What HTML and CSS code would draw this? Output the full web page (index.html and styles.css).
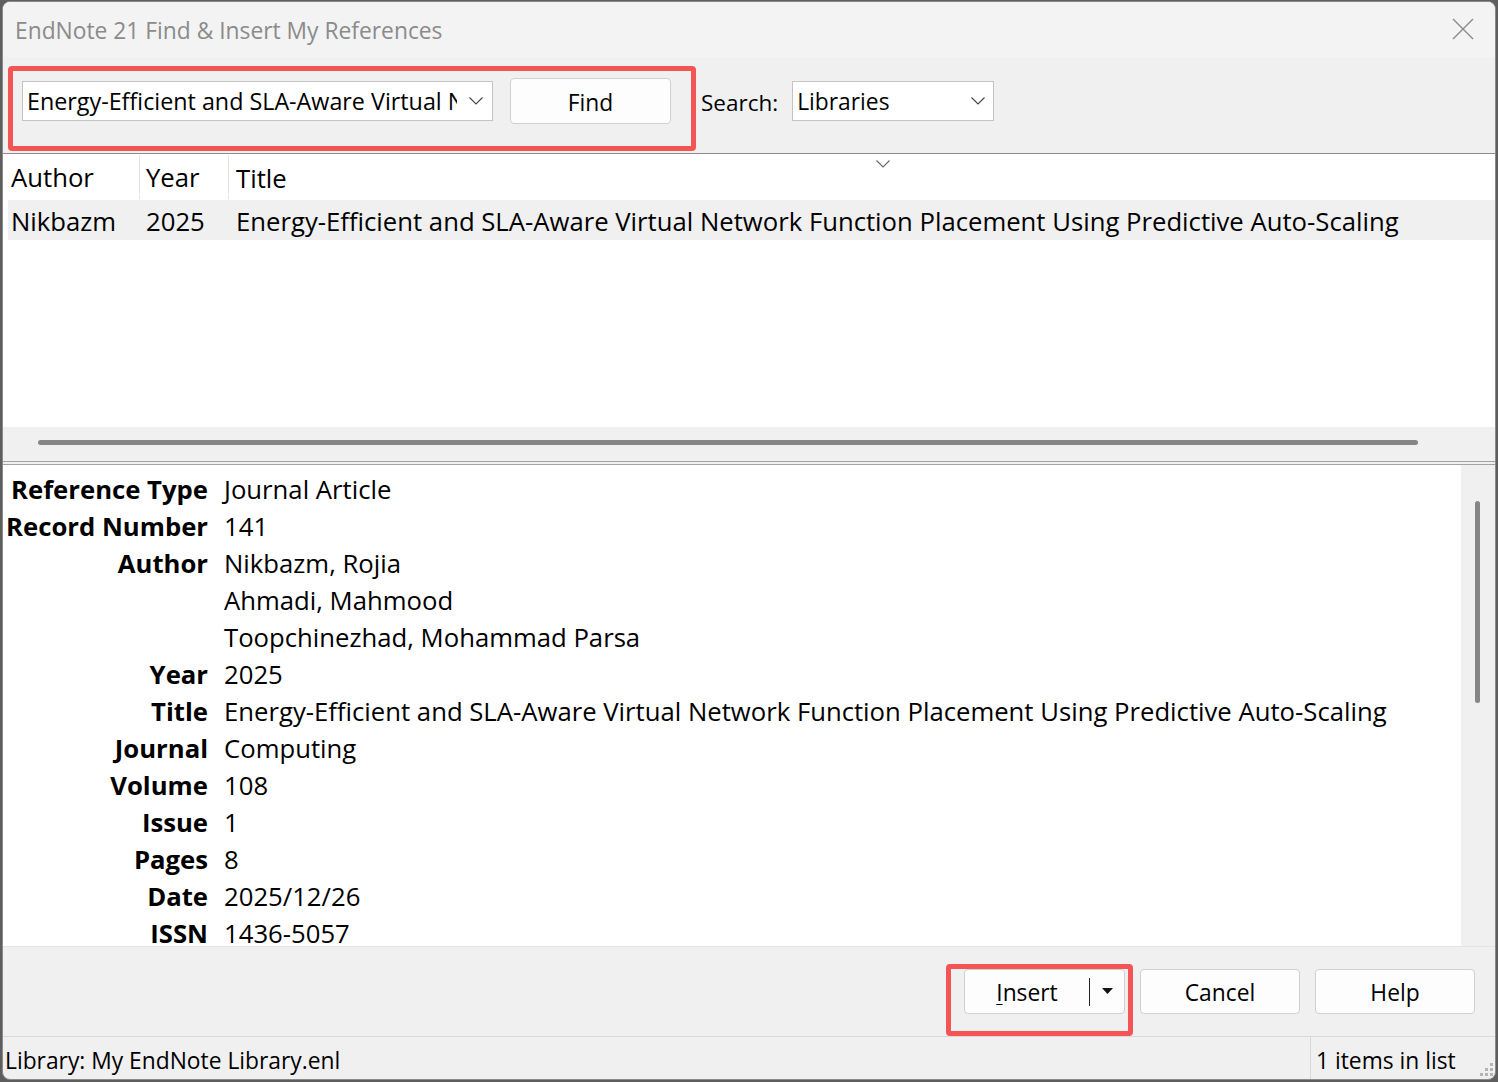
FILE: index.html
```html
<!DOCTYPE html>
<html lang="en">
<head>
<meta charset="utf-8">
<title>EndNote 21 Find &amp; Insert My References</title>
<link rel="stylesheet" href="styles.css">
</head>
<body>
<div class="window">
  <div class="titlebar">
    <span class="title">EndNote 21 Find &amp; Insert My References</span>
    <svg class="close" width="22" height="22" viewBox="0 0 22 22"><path d="M1 1 L21 21 M21 1 L1 21" stroke="#8a8a8a" stroke-width="1.4" fill="none"/></svg>
  </div>

  <div class="toolbar">
    <div class="highlight find-group">
      <div class="combo combo-query">
        <span class="combo-text">Energy-Efficient and SLA-Aware Virtual Network Function Placement Using Predictive Auto-Scaling</span>
        <span class="combo-arrow"><svg width="14" height="8" viewBox="0 0 14 8"><path d="M0.5 0.5 L7 7 L13.5 0.5" stroke="#444" stroke-width="1.1" fill="none"/></svg></span>
      </div>
      <button class="btn btn-find">Find</button>
    </div>
    <div class="search-group">
      <span class="search-label">Search:</span>
      <div class="combo combo-lib">
        <span class="combo-text">Libraries</span>
        <span class="combo-arrow"><svg width="14" height="8" viewBox="0 0 14 8"><path d="M0.5 0.5 L7 7 L13.5 0.5" stroke="#444" stroke-width="1.1" fill="none"/></svg></span>
      </div>
    </div>
  </div>

  <div class="list">
    <div class="list-header">
      <div class="hcell hc-author">Author</div>
      <div class="hcell hc-year">Year</div>
      <div class="hcell hc-title">Title</div>
      <svg class="sort-arrow" width="14" height="8" viewBox="0 0 14 8"><path d="M0.5 0.5 L7 7 L13.5 0.5" stroke="#666" stroke-width="1.1" fill="none"/></svg>
    </div>
    <div class="list-row">
      <div class="rcell rc-author">Nikbazm</div>
      <div class="rcell rc-year">2025</div>
      <div class="rcell rc-title">Energy-Efficient and SLA-Aware Virtual Network Function Placement Using Predictive Auto-Scaling</div>
    </div>
    <div class="list-empty"></div>
    <div class="hscroll"><div class="hthumb"></div></div>
  </div>
  <div class="splitter"></div>

  <div class="details">
    <div class="details-content">
      <dl class="fields">
        <dt>Reference Type</dt><dd>Journal Article</dd>
        <dt>Record Number</dt><dd>141</dd>
        <dt>Author</dt><dd>Nikbazm, Rojia</dd>
        <dt></dt><dd>Ahmadi, Mahmood</dd>
        <dt></dt><dd>Toopchinezhad, Mohammad Parsa</dd>
        <dt>Year</dt><dd>2025</dd>
        <dt>Title</dt><dd>Energy-Efficient and SLA-Aware Virtual Network Function Placement Using Predictive Auto-Scaling</dd>
        <dt>Journal</dt><dd>Computing</dd>
        <dt>Volume</dt><dd>108</dd>
        <dt>Issue</dt><dd>1</dd>
        <dt>Pages</dt><dd>8</dd>
        <dt>Date</dt><dd>2025/12/26</dd>
        <dt>ISSN</dt><dd>1436-5057</dd>
        <dt>DOI</dt><dd>10.1007/s00607-025-01596-x</dd>
      </dl>
    </div>
    <div class="vscroll"><div class="vthumb"></div></div>
  </div>

  <div class="buttons">
    <div class="highlight insert-group">
      <div class="btn btn-split">
        <span class="split-main"><span class="accel">I</span>nsert</span>
        <span class="split-sep"></span>
        <span class="split-drop"><svg width="11" height="6" viewBox="0 0 11 6"><path d="M0 0 L11 0 L5.5 6 Z" fill="#111"/></svg></span>
      </div>
    </div>
    <button class="btn btn-cancel">Cancel</button>
    <button class="btn btn-help">Help</button>
  </div>

  <div class="statusbar">
    <div class="status-left">Library: My EndNote Library.enl</div>
    <div class="status-right">
      <span>1 items in list</span>
      <svg class="grip" width="16" height="16" viewBox="0 0 16 16" fill="#b4b4b4">
        <rect x="12" y="1" width="3" height="3"/>
        <rect x="7" y="6" width="3" height="3"/><rect x="12" y="6" width="3" height="3"/>
        <rect x="2" y="11" width="3" height="3"/><rect x="7" y="11" width="3" height="3"/><rect x="12" y="11" width="3" height="3"/>
      </svg>
    </div>
  </div>
</div>
</body>
</html>
```

FILE: styles.css
```css
* { box-sizing: border-box; }

html, body {
  margin: 0;
  width: 1498px;
  height: 1082px;
  overflow: hidden;
}

body {
  padding: 1px 0 0 2px;
  background: #5e5e5e;
  font-family: "Open Sans", "Noto Sans", sans-serif;
  color: #000;
}

.window {
  width: 1494px;
  height: 1079px;
  border: 1px solid #8a8a8a;
  border-radius: 8px;
  overflow: hidden;
  background: #f0f0f0;
  display: flex;
  flex-direction: column;
}

/* Title bar */
.titlebar {
  height: 55px;
  flex: none;
  background: #f3f3f3;
  display: flex;
  align-items: center;
  padding-left: 12px;
  padding-right: 21px;
}
.title {
  font-size: 22.8px;
  color: #8b8b8b;
  padding-top: 1px;
  white-space: nowrap;
}
.close {
  margin-left: auto;
  margin-top: -2px;
}

/* Toolbar */
.toolbar {
  height: 96px;
  flex: none;
  display: flex;
  align-items: flex-start;
  padding: 9px 0 0 5px;
}
.highlight {
  border: 5px solid #f55454;
  border-radius: 4px;
}
.find-group {
  display: flex;
  align-items: center;
  gap: 17px;
  padding: 7px 20px 22px 9px;
}
.combo {
  height: 40px;
  background: #fff;
  border: 1px solid #c4c4c4;
  display: flex;
  align-items: center;
  font-size: 22.8px;
}
.combo-text {
  flex: 1;
  min-width: 0;
  overflow: hidden;
  white-space: nowrap;
  padding: 1px 0 0 4px;
  line-height: 37px;
}
.combo-query .combo-text { font-size: 23.3px; }
.combo-arrow {
  flex: none;
  width: 35px;
  display: flex;
  justify-content: center;
  padding-left: 2px;
}
.combo-query { width: 471px; }
.combo-lib { width: 202px; margin-left: 14px; }
.combo-lib .combo-arrow { width: 33px; }

.btn {
  background: #fdfdfd;
  border: 1px solid #d0d0d0;
  border-radius: 4px;
  font-family: inherit;
  font-size: 22.8px;
  line-height: 1.2;
  color: #000;
  padding: 3px 0 0 0;
}
.btn-find { width: 161px; height: 46px; }

.search-group {
  margin-top: 12px;
  margin-left: 5px;
  height: 46px;
  display: flex;
  align-items: center;
}
.search-label { font-size: 22.5px; white-space: nowrap; padding-top: 2px; }

/* Results list */
.list {
  height: 309px;
  flex: none;
  background: #fff;
  border-top: 1px solid #8c8c8c;
  border-bottom: 1px solid #a3a3a3;
  display: flex;
  flex-direction: column;
  font-size: 25.7px;
}
.list-header {
  position: relative;
  height: 46px;
  flex: none;
  display: flex;
  align-items: stretch;
}
.hcell {
  padding-top: 4px;
  line-height: 42px;
  white-space: nowrap;
}
.hc-author, .hc-year {
  border-right: 1px solid #e5e5e5;
  margin: 1px 0;
  padding-top: 3px;
  line-height: 40px;
}
.hc-author { width: 137px; padding-left: 8px; }
.hc-year { width: 89px; padding-left: 6px; }
.hc-title { padding-left: 7px; }
.sort-arrow {
  position: absolute;
  left: 873px;
  top: 6px;
}
.list-row {
  height: 40px;
  flex: none;
  margin-left: 5px;
  background: #f0f0f0;
  display: flex;
  line-height: 37px;
  padding-top: 3px;
  white-space: nowrap;
}
.rc-author { width: 132px; padding-left: 3px; }
.rc-year { width: 89px; padding-left: 6px; }
.rc-title { padding-left: 7px; }
.list-empty { flex: 1; }
.hscroll {
  height: 34px;
  flex: none;
  background: #f0f0f0;
  padding: 13px 0 0 35px;
}
.hthumb {
  width: 1380px;
  height: 5px;
  border-radius: 3px;
  background: #868686;
}
.splitter {
  height: 3px;
  flex: none;
  border-bottom: 1px solid #a3a3a3;
  background: #f0f0f0;
}

/* Details */
.details {
  flex: 1;
  min-height: 0;
  display: flex;
  border-bottom: 1px solid #e4e4e4;
}
.details-content {
  flex: 1;
  background: #fff;
  overflow: hidden;
  padding-top: 6px;
}
.fields {
  margin: 0;
  display: grid;
  grid-template-columns: 205px auto;
  grid-auto-rows: 37px;
  column-gap: 16px;
  font-size: 25.7px;
  line-height: 37px;
  white-space: nowrap;
}
.fields dt {
  font-weight: 700;
  text-align: right;
}
.fields dd { margin: 0; }
.vscroll {
  width: 34px;
  flex: none;
  background: #f0f0f0;
  padding: 36px 0 0 14px;
}
.vthumb {
  width: 5px;
  height: 202px;
  border-radius: 3px;
  background: #868686;
}

/* Buttons */
.buttons {
  height: 89px;
  flex: none;
  display: flex;
  justify-content: flex-end;
  align-items: flex-start;
  padding: 17px 20px 0 0;
}
.insert-group {
  padding: 0 3px 17px 13px;
  margin-right: 7px;
}
.btn-split {
  width: 161px;
  height: 45px;
  display: flex;
  align-items: center;
  padding: 0;
}
.split-main {
  width: 124px;
  text-align: center;
  padding-top: 3px;
}
.accel { text-decoration: underline; text-underline-offset: 3px; text-decoration-thickness: 1px; }
.split-sep {
  width: 1px;
  height: 28px;
  background: #222;
}
.split-drop {
  flex: 1;
  display: flex;
  justify-content: center;
  padding-bottom: 2px;
}
.btn-cancel, .btn-help { width: 160px; height: 45px; margin-top: 5px; }
.btn-cancel { margin-right: 15px; }

/* Status bar */
.statusbar {
  height: 43px;
  flex: none;
  border-top: 1px solid #d9d9d9;
  display: flex;
  font-size: 22.8px;
}
.status-left {
  width: 1307px;
  padding: 8px 0 0 2px;
  white-space: nowrap;
}
.status-right {
  flex: 1;
  border-left: 1px solid #d9d9d9;
  display: flex;
  padding: 8px 0 0 5px;
  white-space: nowrap;
  position: relative;
}
.grip {
  position: absolute;
  right: 1px;
  bottom: 1px;
}
```
